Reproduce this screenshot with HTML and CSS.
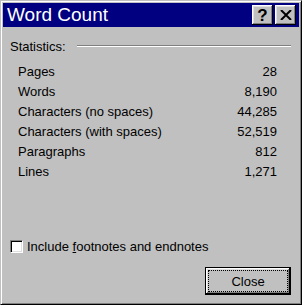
FILE: index.html
```html
<!DOCTYPE html>
<html lang="en">
<head>
    <meta charset="UTF-8">
    <title>Word Count</title>
    <link rel="stylesheet" href="styles.css">
</head>
<body>
<div class="window">
    <div class="titlebar">
        <span class="title">Word Count</span>
        <div class="caption-buttons">
            <button class="cap-btn help">?</button>
            <button class="cap-btn close-x">
                <svg width="12" height="10" viewBox="0 0 12 10">
                    <path d="M1 0 L11 10 M11 0 L1 10" stroke="#000" stroke-width="2" fill="none"/>
                </svg>
            </button>
        </div>
    </div>

    <div class="content">
        <!-- Statistics group -->
        <div class="group-head">
            <span>Statistics:</span>
            <div class="rule"></div>
        </div>

        <div class="stats">
            <div class="stat"><span>Pages</span><span>28</span></div>
            <div class="stat"><span>Words</span><span>8,190</span></div>
            <div class="stat"><span>Characters (no spaces)</span><span>44,285</span></div>
            <div class="stat"><span>Characters (with spaces)</span><span>52,519</span></div>
            <div class="stat"><span>Paragraphs</span><span>812</span></div>
            <div class="stat"><span>Lines</span><span>1,271</span></div>
        </div>

        <label class="check-row">
            <span class="checkbox"></span>
            <span>Include <u>f</u>ootnotes and endnotes</span>
        </label>

        <div class="actions">
            <button class="btn default"><span class="focus">Close</span></button>
        </div>
    </div>
</div>
</body>
</html>
```

FILE: styles.css
```css
body {
    margin: 0;
    padding: 0;
    font-family: "Liberation Sans", Arial, sans-serif;
    font-size: 13px;
    color: #000;
    background: #c0c0c0;
}

/* classic 3D window frame: outer light/black, inner white/grey */
.window {
    width: 302px;
    height: 305px;
    box-sizing: border-box;
    border: 1px solid;
    border-color: #c0c0c0 #000 #000 #c0c0c0;
    box-shadow: inset 1px 1px #fff, inset -1px -1px #808080;
    padding: 2px;
    background: #c0c0c0;
}

.titlebar {
    height: 24px;
    background: #000080;
    color: #fff;
    display: flex;
    align-items: center;
    padding-left: 4px;
}

.title {
    font-size: 19px;
    line-height: 24px;
    flex: 1;
}

.caption-buttons {
    display: flex;
    gap: 2px;
    margin-right: 3px;
}

.cap-btn {
    width: 21px;
    height: 20px;
    padding: 0;
    border: none;
    background: #c0c0c0;
    box-shadow: inset -1px -1px #000, inset 1px 1px #fff, inset -2px -2px #808080, inset 2px 2px #dfdfdf;
    display: flex;
    align-items: center;
    justify-content: center;
    font-family: "Liberation Sans", Arial, sans-serif;
}

.help {
    font-size: 17px;
    font-weight: bold;
    line-height: 20px;
    padding-top: 1px;
}

.content {
    padding: 11px 8px 7px 7px;
}

.group-head {
    display: flex;
    align-items: center;
    height: 18px;
    line-height: 18px;
}

.rule {
    flex: 1;
    height: 0;
    border-top: 1px solid #808080;
    border-bottom: 1px solid #fff;
    margin-left: 11px;
    margin-bottom: 2px;
}

.stats {
    margin-top: 6px;
    padding: 0 14px 0 8px;
}

.stat {
    display: flex;
    justify-content: space-between;
    height: 20px;
    line-height: 20px;
}

.check-row {
    display: flex;
    align-items: center;
    gap: 4px;
    height: 19px;
    line-height: 19px;
    margin-top: 55px;
}

.checkbox {
    width: 13px;
    height: 13px;
    box-sizing: border-box;
    background: #fff;
    border: 1px solid;
    border-color: #808080 #fff #fff #808080;
    box-shadow: inset 1px 1px #000, inset -1px -1px #dfdfdf;
}

.actions {
    display: flex;
    justify-content: flex-end;
    margin-top: 11px;
}

.btn {
    width: 86px;
    height: 28px;
    padding: 2px;
    background: #c0c0c0;
    border: none;
    box-shadow: inset -1px -1px #000, inset 1px 1px #fff, inset -2px -2px #808080, inset 2px 2px #dfdfdf;
    font-family: "Liberation Sans", Arial, sans-serif;
    font-size: 13px;
    color: #000;
    display: flex;
}

.btn.default {
    border: 1px solid #000;
}

.focus {
    flex: 1;
    border: 1px dotted #000;
    display: flex;
    align-items: center;
    justify-content: center;
}
```
